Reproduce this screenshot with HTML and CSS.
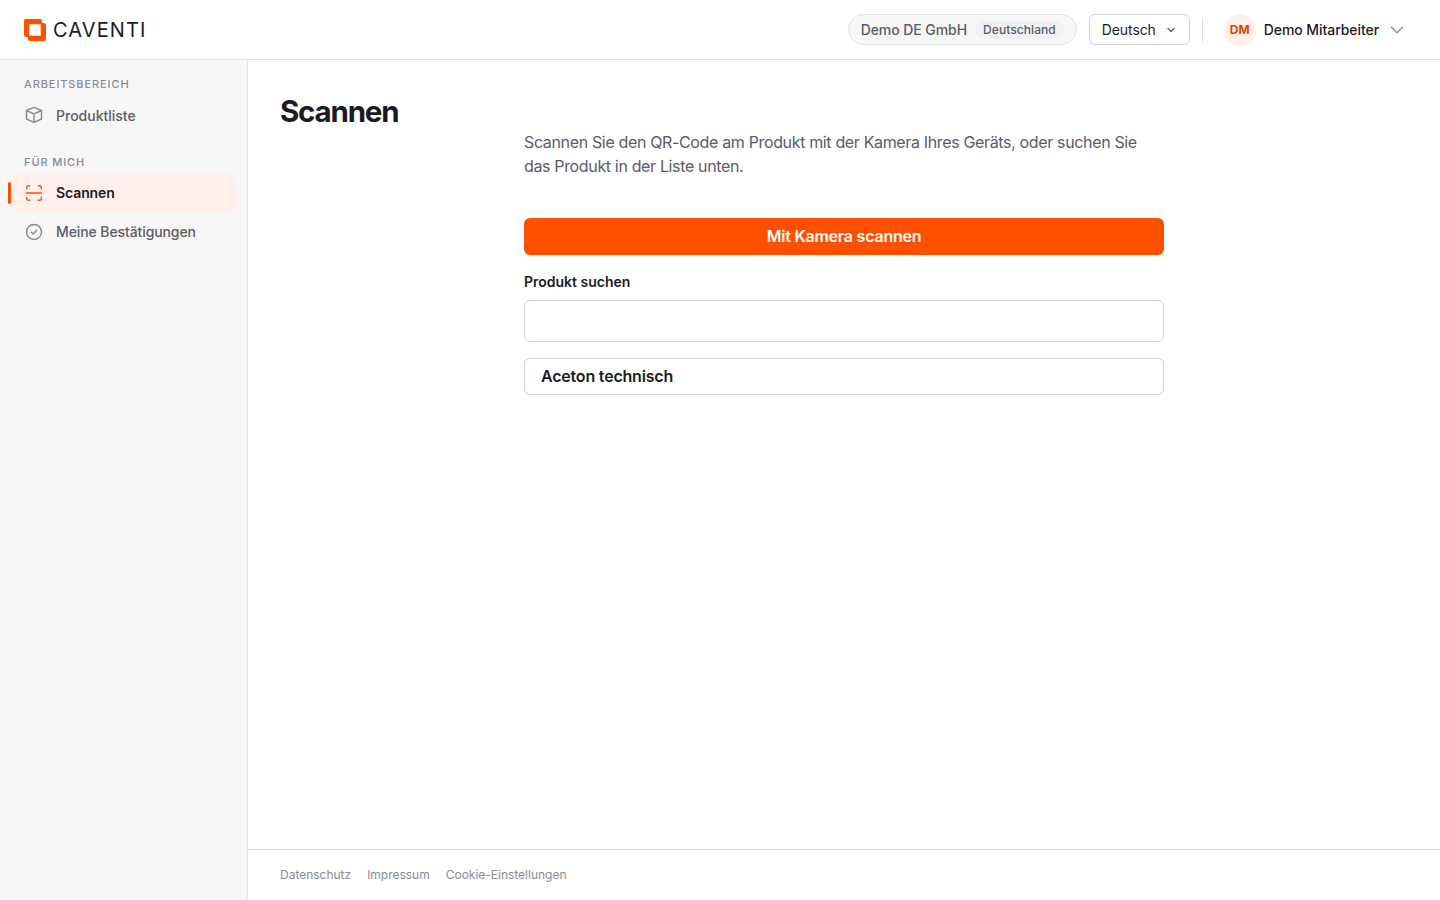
FILE: index.html
```html
<!DOCTYPE html>
<html lang="de">
<head>
<meta charset="utf-8">
<title>Scannen – Caventi</title>
<link rel="stylesheet" href="styles.css">
</head>
<body>
<header class="topbar">
  <a class="brand">
    <svg width="22" height="22" viewBox="0 0 22 22"><rect width="18" height="18" rx="2" fill="#ff5000"/><rect x="4" y="4" width="18" height="18" rx="2" fill="#ff5000"/><rect x="5.3" y="5.3" width="11.4" height="11.4" fill="#fff"/></svg>
    <span class="brand-name">CAVENTI</span>
  </a>
  <div class="tools">
    <div class="tenant"><span class="tenant-name">Demo DE GmbH</span><span class="country">Deutschland</span></div>
    <button class="language"><span>Deutsch</span><svg width="12" height="12" viewBox="0 0 12 12" fill="none" stroke="#5c5b66" stroke-width="1.4" stroke-linecap="round" stroke-linejoin="round"><path d="M3 4.6l3 3 3-3"/></svg></button>
    <div class="user"><span class="avatar">DM</span><span class="user-name">Demo Mitarbeiter</span><svg width="14" height="14" viewBox="0 0 14 14" fill="none" stroke="#8b8a95" stroke-width="1.3" stroke-linecap="round" stroke-linejoin="round"><path d="M1.500 4.200L7 9.700l5.500-5.500"/></svg></div>
  </div>
</header>
<div class="shell">
  <nav class="sidebar">
    <div class="group">
      <h2 class="group-label">Arbeitsbereich</h2>
      <a class="item"><svg class="icon" viewBox="0 0 20 20"><path d="M10 2.300L17.500 5.500V14L10 17.300 2.500 14V5.500zM2.500 5.500L10 8.900l7.500-3.400M10 8.900v8.400"/></svg><span class="low">Produktliste</span></a>
    </div>
    <div class="group">
      <h2 class="group-label">Für mich</h2>
      <a class="item active"><svg class="icon" viewBox="0 0 20 20"><path d="M2.700 5.700V4.500a1.800 1.800 0 0 1 1.800-1.800h1.200M14.300 2.700h1.200a1.800 1.800 0 0 1 1.800 1.800v1.200M17.300 14.300v1.200a1.800 1.800 0 0 1-1.800 1.800h-1.200M5.700 17.300H4.500a1.800 1.800 0 0 1-1.800-1.800v-1.200M2.500 10h15"/></svg><span>Scannen</span></a>
      <a class="item"><svg class="icon" viewBox="0 0 20 20"><circle cx="10" cy="10" r="7.500"/><path d="M7.300 10.200l1.900 1.800 3.500-3.700"/></svg><span class="wide">Meine Bestätigungen</span></a>
    </div>
  </nav>
  <div class="page">
    <main class="content">
      <h1 class="title">Scannen</h1>
      <div class="column">
        <p class="intro">Scannen Sie den QR-Code am Produkt mit der Kamera Ihres Geräts, oder suchen Sie das Produkt in der Liste unten.</p>
        <button class="primary">Mit Kamera scannen</button>
        <label class="label" for="search">Produkt suchen</label>
        <input class="search" id="search" type="text">
        <a class="product">Aceton technisch</a>
      </div>
    </main>
    <footer class="footer"><a>Datenschutz</a><a>Impressum</a><a>Cookie-Einstellungen</a></footer>
  </div>
</div>
</body>
</html>
```
FILE: styles.css
```css
* { box-sizing: border-box; }
body {
  margin: 0;
  height: 100vh;
  display: flex;
  flex-direction: column;
  font-family: Inter, "Liberation Sans", sans-serif;
  font-size: 14px;
  color: #1b1b1f;
  background: #fff;
}
button, input { font: inherit; color: inherit; }
svg { flex: none; display: block; }
.topbar {
  height: 60px;
  flex: none;
  display: flex;
  align-items: center;
  justify-content: space-between;
  padding: 0 36px 0 24px;
  border-bottom: 1px solid #e2e2e4;
}
.brand { display: flex; align-items: center; gap: 7px; }
.brand-name { font-size: 20px; line-height: 24px; letter-spacing: 1.1px; }
.tools { display: flex; align-items: center; gap: 12px; }
.tenant {
  height: 31px;
  display: flex;
  align-items: center;
  gap: 8px;
  padding: 0 12px;
  border: 1px solid #e2e2e4;
  border-radius: 16px;
  background: #f7f7f7;
  color: #5c5b66;
  font-weight: 500;
}
.tenant-name { letter-spacing: -0.07px; }
.country {
  padding: 0 8px;
  border-radius: 9px;
  background: #f1f1f3;
  font-size: 12px;
  line-height: 18px;
  letter-spacing: 0.07px;
}
.language {
  height: 31px;
  display: flex;
  align-items: center;
  gap: 9px;
  padding: 0 12px;
  border: 1px solid #d1d1d4;
  border-radius: 6px;
  background: #fff;
  letter-spacing: -0.1px;
}
.user {
  display: flex;
  align-items: center;
  gap: 8px;
  font-weight: 500;
  height: 24px;
  padding-left: 21px;
  border-left: 1px solid #e2e2e4;
}
.user-name { letter-spacing: -0.07px; }
.user svg { margin-left: 3px; }
.avatar {
  width: 32px;
  height: 32px;
  border-radius: 50%;
  background: #fff0eb;
  color: #e04500;
  font-size: 12px;
  font-weight: 700;
  letter-spacing: 0.2px;
  line-height: 32px;
  text-align: center;
}
.shell { flex: 1; display: flex; min-height: 0; }
.sidebar {
  width: 248px;
  flex: none;
  padding: 16px 12px 0;
  display: flex;
  flex-direction: column;
  gap: 20px;
  background: #f7f7f7;
  border-right: 1px solid #e2e2e4;
}
.group { display: flex; flex-direction: column; gap: 1px; }
.group-label {
  margin: 0 0 3px;
  padding-left: 12px;
  font-size: 11px;
  line-height: 16px;
  font-weight: 500;
  letter-spacing: 0.9px;
  text-transform: uppercase;
  color: #8b8a95;
}
.item {
  position: relative;
  display: flex;
  align-items: center;
  gap: 12px;
  height: 38px;
  padding: 0 12px;
  border-radius: 6px;
  font-weight: 500;
  line-height: 16px;
  color: #5c5b66;
}
.icon {
  width: 20px;
  height: 20px;
  fill: none;
  stroke: #8b8a95;
  stroke-width: 1.4;
  stroke-linecap: round;
  stroke-linejoin: round;
}
.low { padding-top: 2px; }
.wide { letter-spacing: -0.1px; }
.active { background: #fff0eb; color: #1b1b1f; font-weight: 600; letter-spacing: -0.1px; }
.active .icon { stroke: #ff5000; }
.active::before {
  content: "";
  position: absolute;
  left: -4px;
  top: 8px;
  width: 3px;
  height: 22px;
  border-radius: 2px;
  background: #ff5000;
}
.page { flex: 1; display: flex; flex-direction: column; }
.content { flex: 1; padding: 32px 32px 0; }
.title {
  margin: 0;
  font-size: 29.5px;
  line-height: 38px;
  font-weight: 700;
  letter-spacing: -1.2px;
}
.column { width: 640px; margin: 0 auto; display: flex; flex-direction: column; }
.intro { margin: 0 0 40px; font-size: 16px; line-height: 24px; letter-spacing: -0.35px; color: #5c5b66; }
.primary {
  height: 37px;
  padding: 0 0 2px;
  border: 0;
  border-radius: 6px;
  background: #ff5000;
  color: #fff;
  font-size: 16px;
  font-weight: 600;
  line-height: 20px;
  letter-spacing: -0.22px;
}
.label { margin: 17px 0 8px; font-weight: 600; line-height: 20px; }
.search {
  height: 42px;
  padding: 0 12px;
  border: 1px solid #d1d1d4;
  border-radius: 6px;
}
.product {
  height: 37px;
  margin-top: 16px;
  padding: 0 16px;
  border: 1px solid #d1d1d4;
  border-radius: 6px;
  font-size: 16px;
  font-weight: 600;
  line-height: 35px;
  letter-spacing: -0.2px;
}
.footer {
  height: 51px;
  display: flex;
  align-items: center;
  gap: 16px;
  padding: 0 32px 1px;
  border-top: 1px solid #e2e2e4;
  font-size: 12px;
  line-height: 16px;
  letter-spacing: -0.01px;
  color: #8b8a95;
}
```
